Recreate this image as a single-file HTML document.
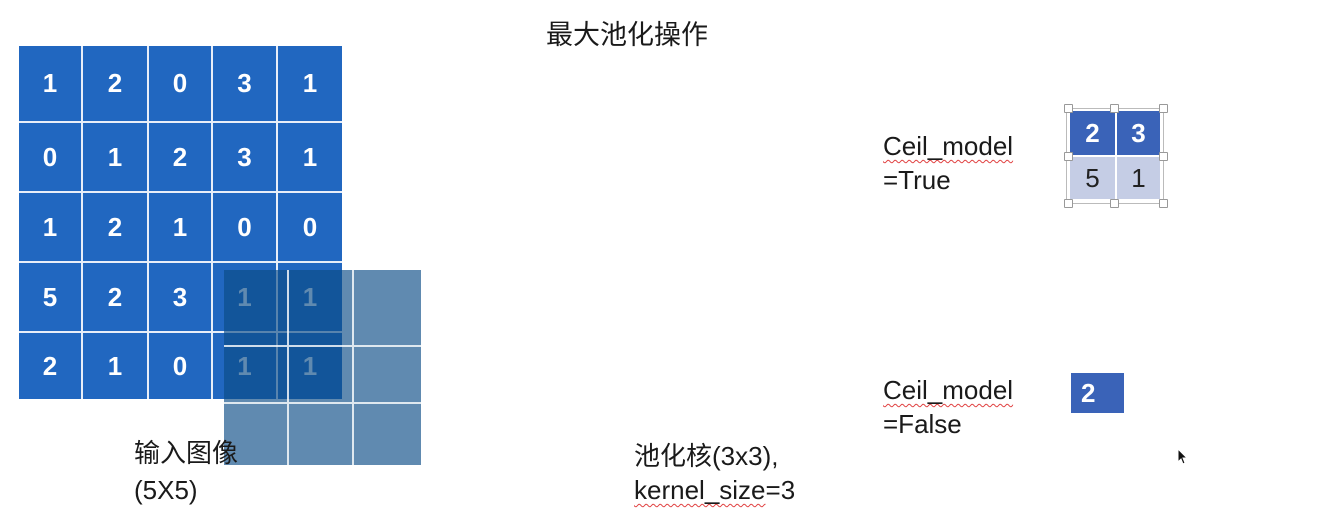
<!DOCTYPE html>
<html><head><meta charset="utf-8"><style>
body{margin:0;width:1325px;height:528px;background:#fff;position:relative;overflow:hidden;font-family:"Liberation Sans","Noto Sans CJK SC",sans-serif;color:#1a1a1a}
.a{position:absolute}
.c{position:absolute;background:#2167c0;color:#fff;font-weight:bold;font-size:26px;display:flex;align-items:center;justify-content:center;box-sizing:border-box}
.t{position:absolute;font-size:26px;line-height:1;white-space:nowrap;z-index:5}
.sq{text-decoration:underline wavy #e04040 1px;text-underline-offset:4px}
.h{position:absolute;width:7px;height:7px;background:#fff;border:1px solid #999;border-radius:1px}
</style></head><body>
<div class="t" style="left:546px;top:22px;font-size:27px">最大池化操作</div>
<div id="g"></div>
<script>
var xs=[19,81,147,211,276,342],ys=[46,121,191,261,331,399];
var v=[[1,2,0,3,1],[0,1,2,3,1],[1,2,1,0,0],[5,2,3,1,1],[2,1,0,1,1]];
var h='';
for(var r=0;r<5;r++)for(var c=0;c<5;c++){
h+='<div class="c" style="left:'+xs[c]+'px;top:'+ys[r]+'px;width:'+(xs[c+1]-xs[c])+'px;height:'+(ys[r+1]-ys[r])+'px;border-left:'+(c?2:0)+'px solid #e8eef8;border-top:'+(r?2:0)+'px solid #e8eef8">'+v[r][c]+'</div>';}
var ox=[224,287,352,421],oy=[270,345,402,465];
for(var r=0;r<3;r++)for(var c=0;c<3;c++){
h+='<div class="a" style="left:'+ox[c]+'px;top:'+oy[r]+'px;width:'+(ox[c+1]-ox[c])+'px;height:'+(oy[r+1]-oy[r])+'px;background:rgba(10,75,134,0.65);box-sizing:border-box;border-left:'+(c?2:0)+'px solid rgba(255,255,255,0.8);border-top:'+(r?2:0)+'px solid rgba(255,255,255,0.8)"></div>';}
document.getElementById('g').innerHTML=h;
</script>
<div class="t" style="left:134px;top:440px">输入图像</div>
<div class="t" style="left:134px;top:477px">(5X5)</div>
<div class="t" style="left:634px;top:443px">池化核(3x3),</div>
<div class="t" style="left:634px;top:477px"><span class="sq">kernel_size</span>=3</div>
<div class="t" style="left:883px;top:133px"><span class="sq">Ceil_model</span></div>
<div class="t" style="left:883px;top:167px">=True</div>
<div class="t" style="left:883px;top:377px"><span class="sq">Ceil_model</span></div>
<div class="t" style="left:883px;top:411px">=False</div>
<div class="a" style="left:1066px;top:108px;width:96px;height:94px;border:1px solid #bbb"></div>
<div class="c" style="left:1070px;top:111px;width:45px;height:44px;background:#3a63b8">2</div>
<div class="c" style="left:1117px;top:111px;width:43px;height:44px;background:#3a63b8">3</div>
<div class="c" style="left:1070px;top:157px;width:45px;height:42px;background:#c5cde5;color:#222;font-weight:normal">5</div>
<div class="c" style="left:1117px;top:157px;width:43px;height:42px;background:#c5cde5;color:#222;font-weight:normal">1</div>
<div class="h" style="left:1064px;top:104px"></div><div class="h" style="left:1110px;top:104px"></div><div class="h" style="left:1159px;top:104px"></div>
<div class="h" style="left:1064px;top:152px"></div><div class="h" style="left:1159px;top:152px"></div>
<div class="h" style="left:1064px;top:199px"></div><div class="h" style="left:1110px;top:199px"></div><div class="h" style="left:1159px;top:199px"></div>
<div class="c" style="left:1071px;top:373px;width:53px;height:40px;background:#3a63b8;justify-content:flex-start;padding-left:10px">2</div>
<svg class="a" style="left:1177px;top:448px" width="12" height="18" viewBox="0 0 12 18"><path d="M1 1 L1 14 L4 11 L6 16 L8 15 L6 10 L10 10 Z" fill="#111" stroke="#fff" stroke-width="1"/></svg>
</body></html>
